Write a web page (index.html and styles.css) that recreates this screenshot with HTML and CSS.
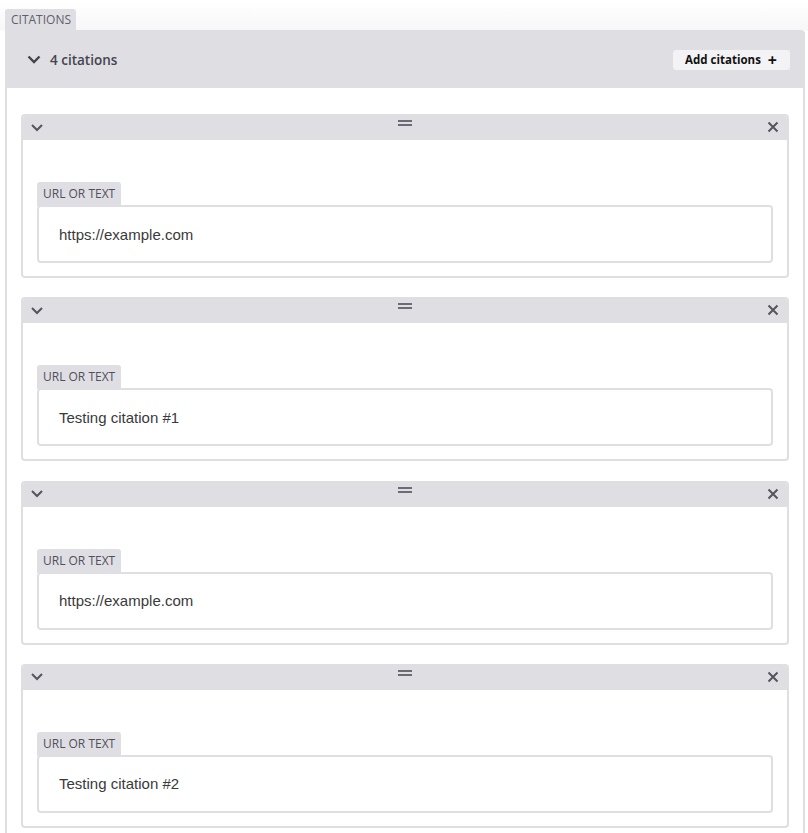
FILE: index.html
```html
<!DOCTYPE html>
<html>
<head>
<meta charset="utf-8" />
<title>Citations</title>
<link rel="stylesheet" href="styles.css">
</head>
<body>

<div class="field">
  <div class="fieldTab">CITATIONS</div>
  <div class="panel">
    <div class="panelHead">
      <div class="panelTitle">
        <svg class="chev big" viewBox="0 0 14 9"><path d="M1.5 1.5 L7 7 L12.5 1.5" /></svg>
        <span>4 citations</span>
      </div>
      <button class="addBtn" type="button">Add citations <span class="plus">+</span></button>
    </div>
    <div class="panelBody">

      <div class="card">
        <div class="cardHead">
          <svg class="chev" viewBox="0 0 14 9"><path d="M2 2 L7 7 L12 2" /></svg>
          <span class="grip"></span>
          <svg class="close" viewBox="0 0 12 12"><path d="M1.5 1.5 L10.5 10.5 M10.5 1.5 L1.5 10.5" /></svg>
        </div>
        <div class="cardBody">
          <div class="label">URL OR TEXT</div>
          <div class="input">https://example.com</div>
        </div>
      </div>

      <div class="card">
        <div class="cardHead">
          <svg class="chev" viewBox="0 0 14 9"><path d="M2 2 L7 7 L12 2" /></svg>
          <span class="grip"></span>
          <svg class="close" viewBox="0 0 12 12"><path d="M1.5 1.5 L10.5 10.5 M10.5 1.5 L1.5 10.5" /></svg>
        </div>
        <div class="cardBody">
          <div class="label">URL OR TEXT</div>
          <div class="input">Testing citation #1</div>
        </div>
      </div>

      <div class="card">
        <div class="cardHead">
          <svg class="chev" viewBox="0 0 14 9"><path d="M2 2 L7 7 L12 2" /></svg>
          <span class="grip"></span>
          <svg class="close" viewBox="0 0 12 12"><path d="M1.5 1.5 L10.5 10.5 M10.5 1.5 L1.5 10.5" /></svg>
        </div>
        <div class="cardBody">
          <div class="label">URL OR TEXT</div>
          <div class="input">https://example.com</div>
        </div>
      </div>

      <div class="card">
        <div class="cardHead">
          <svg class="chev" viewBox="0 0 14 9"><path d="M2 2 L7 7 L12 2" /></svg>
          <span class="grip"></span>
          <svg class="close" viewBox="0 0 12 12"><path d="M1.5 1.5 L10.5 10.5 M10.5 1.5 L1.5 10.5" /></svg>
        </div>
        <div class="cardBody">
          <div class="label">URL OR TEXT</div>
          <div class="input">Testing citation #2</div>
        </div>
      </div>

    </div>
  </div>
</div>

</body>
</html>
```

FILE: styles.css
```css
html, body {
  margin: 0;
  padding: 0;
  background: linear-gradient(#ffffff, #f7f7f8 30px, #ffffff 31px);
  font-family: "Open Sans", "Noto Sans", sans-serif;
  color: #44444f;
}
.field {
  padding: 9px 3px 0 5px;
}
.fieldTab {
  width: fit-content;
  background: #dfdee3;
  color: #5f5f6e;
  font-size: 12px;
  line-height: 21px;
  height: 21px;
  padding: 0 5px 0 6px;
  border-radius: 3px 3px 0 0;
}
.panel {
  border-radius: 0 4px 0 0;
  overflow: hidden;
}
.panelHead {
  background: #dfdee3;
  height: 58px;
  display: flex;
  align-items: center;
  justify-content: space-between;
  padding: 1px 15px 0 22px;
  box-sizing: border-box;
}
.panelTitle {
  display: flex;
  align-items: center;
  gap: 9px;
  font-size: 13.5px;
  font-weight: 600;
  color: #44444f;
}
.chev {
  width: 14px;
  height: 9px;
  fill: none;
  stroke: #55555f;
  stroke-width: 2;
}
.chev.big {
  stroke: #44444f;
  stroke-width: 2.4;
}
.addBtn {
  font-family: "Open Sans", "Noto Sans", sans-serif;
  font-size: 11.5px;
  font-weight: 700;
  color: #111;
  background: #f3f3f5;
  border: none;
  border-radius: 3px;
  height: 20px;
  padding: 0 13px 0 12px;
  display: flex;
  align-items: center;
  gap: 3px;
}
.addBtn .plus {
  font-size: 16px;
  line-height: 16px;
  margin-left: 4px;
}
.panelBody {
  background: #fff;
  border-left: 2px solid #dfdee3;
  border-right: 2px solid #dfdee3;
  padding: 26px 14px 14px 14px;
  display: flex;
  flex-direction: column;
  gap: 19.33px;
}
.card {
  border: 2px solid #dfdee3;
  border-radius: 4px;
  overflow: hidden;
}
.cardHead {
  background: #dfdee3;
  height: 26px;
  margin: -2px -2px 0 -2px;
  padding: 0 10px 0 9px;
  display: flex;
  align-items: center;
  justify-content: space-between;
  position: relative;
}
.grip {
  position: absolute;
  left: 50%;
  top: 6px;
  width: 14px;
  height: 2px;
  margin-left: -7px;
  background: #6b6b78;
  box-shadow: 0 4px 0 #6b6b78;
}
.close {
  width: 12px;
  height: 12px;
  fill: none;
  stroke: #55555f;
  stroke-width: 2;
}
.cardBody {
  padding: 42px 14px 13px 14px;
}
.label {
  width: fit-content;
  background: #dfdee3;
  color: #50505c;
  font-size: 12px;
  font-weight: 500;
  line-height: 24px;
  height: 24px;
  padding: 0 6px;
  border-radius: 3px 3px 0 0;
}
.input {
  border: 2px solid #dfdee3;
  border-radius: 4px;
  height: 54px;
  margin-top: -1px;
  padding: 0 20px;
  display: flex;
  align-items: center;
  font-family: "Liberation Sans", Arial, sans-serif;
  font-size: 15px;
  color: #3a3a3a;
}
```
